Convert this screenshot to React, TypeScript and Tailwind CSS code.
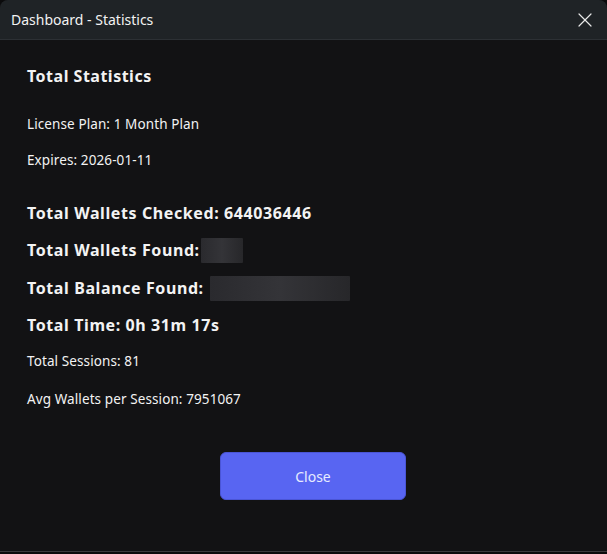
import React from 'react';
import { X } from 'lucide-react';

const font = { fontFamily: '"Segoe UI", "Noto Sans", "Open Sans", sans-serif' };

const Redacted: React.FC<{ w: string }> = ({ w }) => (
  <span
    className={`inline-block h-[25px] -my-[2px] align-middle ${w} bg-gradient-to-r from-[#2a2a2e] via-[#343438] to-[#27272a] rounded-[1px]`}
  />
);

const App: React.FC = () => {
  return (
    <div className="w-[607px] h-[554px] bg-[#0b0b0c]" style={font}>
      <div className="w-full h-[552px] flex flex-col rounded-t-[8px] overflow-hidden bg-[#121214] border-b border-[#3a3a3c]">
        <div className="h-[40px] shrink-0 flex items-center justify-between pl-[11px] pr-[10px] bg-[#1f2326] border-b border-[#2c3034]">
          <span className="text-[14px] text-[#f2f2f2]">Dashboard - Statistics</span>
          <X className="w-[24px] h-[24px] text-[#e8e8e8]" strokeWidth={1.2} />
        </div>

        <div className="flex flex-col pl-[27px] text-[#f3f3f3]">
          <div className="mt-[25px] text-[16px] tracking-[0.5px] font-bold leading-[22px]">Total Statistics</div>
          <div className="mt-[28px] text-[13.5px] tracking-[0.1px] leading-[18px]">License Plan: 1 Month Plan</div>
          <div className="mt-[18px] text-[13.5px] tracking-[0.1px] leading-[18px]">Expires: 2026-01-11</div>

          <div className="mt-[33px] text-[16px] tracking-[0.6px] font-bold leading-[22px]">Total Wallets Checked: 644036446</div>
          <div className="mt-[15px] h-[22px] text-[16px] tracking-[0.6px] font-bold leading-[22px] flex items-center">
            Total Wallets Found:<span className="ml-[1px] flex items-center"><Redacted w="w-[42px]" /></span>
          </div>
          <div className="mt-[16px] h-[22px] text-[16px] tracking-[0.6px] font-bold leading-[22px] flex items-center">
            Total Balance Found:<span className="ml-[6px] flex items-center"><Redacted w="w-[140px]" /></span>
          </div>
          <div className="mt-[15px] text-[16px] tracking-[0.6px] font-bold leading-[22px]">Total Time: 0h 31m 17s</div>

          <div className="mt-[16px] text-[13.5px] tracking-[0.1px] leading-[18px]">Total Sessions: 81</div>
          <div className="mt-[20px] text-[13.5px] tracking-[0.1px] leading-[18px]">Avg Wallets per Session: 7951067</div>
        </div>

        <div className="mt-[44px] pl-[220px]">
          <button className="w-[186px] h-[48px] rounded-[6px] bg-[#5865f2] border border-[#4a55d6] text-[14px] text-[#e6ebff]">
            Close
          </button>
        </div>
      </div>
    </div>
  );
};

export default App;
